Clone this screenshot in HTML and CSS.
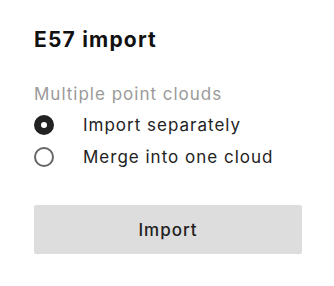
FILE: index.html
```html
<!DOCTYPE html>
<html lang="en">
<head>
    <meta charset="UTF-8">
    <meta name="viewport" content="width=device-width, initial-scale=1.0">
    <title>E57 import</title>
    <link rel="stylesheet" href="styles.css">
</head>
<body>
    <div class="dialog">
        <h1>E57 import</h1>
        <form class="import-form">
            <fieldset class="option-group">
                <legend>Multiple point clouds</legend>
                <label class="radio">
                    <input type="radio" name="clouds" value="separate" checked>
                    <span class="dot"></span>
                    <span>Import separately</span>
                </label>
                <label class="radio">
                    <input type="radio" name="clouds" value="merge">
                    <span class="dot"></span>
                    <span>Merge into one cloud</span>
                </label>
            </fieldset>
            <button type="button" class="btn">Import</button>
        </form>
    </div>
</body>
</html>
```

FILE: styles.css
```css
body {
    font-family: 'Inter', 'Roboto', sans-serif;
    background: #ffffff;
    margin: 0;
    padding: 0;
    color: #222;
}
.dialog {
    padding: 27px 32px 0 34px;
}
h1 {
    margin: 0;
    font-size: 21px;
    line-height: 26px;
    font-weight: 700;
    letter-spacing: 1.2px;
    color: #111;
}
.import-form {
    margin-top: 31px;
}
.option-group {
    border: none;
    margin: 0;
    padding: 0;
}
.option-group legend {
    padding: 0;
    font-size: 17px;
    line-height: 20px;
    letter-spacing: 1px;
    color: #9a9a9a;
}
.radio {
    display: flex;
    align-items: center;
    height: 32px;
    font-size: 17px;
    letter-spacing: 1px;
    color: #222;
}
.radio:first-of-type {
    margin-top: 5px;
}
.radio input {
    display: none;
}
.dot {
    box-sizing: border-box;
    width: 20px;
    height: 20px;
    border: 2px solid #666;
    border-radius: 50%;
    margin-right: 29px;
}
.radio input:checked + .dot {
    border: 7px solid #222;
}
.btn {
    display: block;
    width: 100%;
    height: 49px;
    margin-top: 32px;
    border: none;
    border-radius: 2px;
    background: #dddddd;
    font-family: inherit;
    font-size: 17px;
    font-weight: 500;
    letter-spacing: 1px;
    color: #222;
}
```
